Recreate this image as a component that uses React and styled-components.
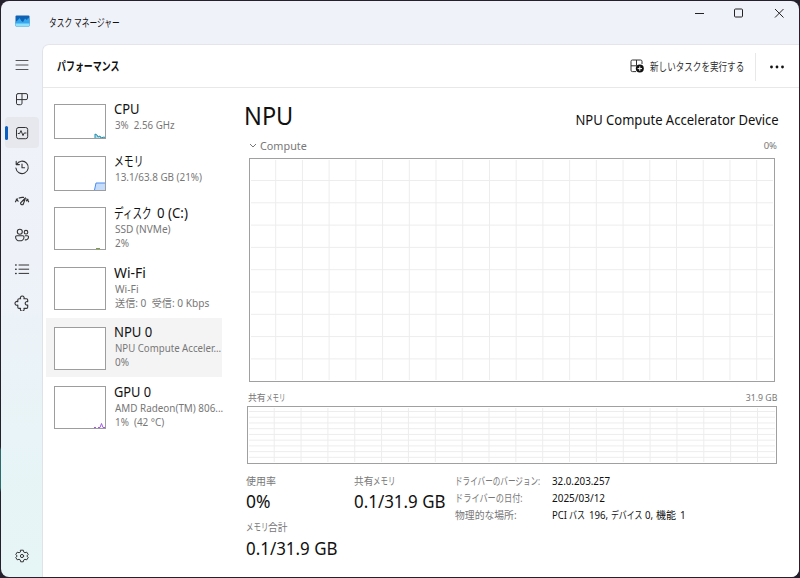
import React from "react";
import styled, { createGlobalStyle, css } from "styled-components";

const GlobalStyle = createGlobalStyle`
  * {
    box-sizing: border-box;
  }
  body {
    margin: 0;
    background: linear-gradient(180deg, #24212c 447px, #2c6b6c 450px, #2c6b6c 488px, #24212c 492px) left / 2px 578px no-repeat #24212c;
    font-family: "Noto Sans", "Noto Sans CJK JP", sans-serif;
  }
`;

const Window = styled.div`
  width: 798px;
  height: 576px;
  margin: 1px;
  display: flex;
  flex-direction: column;
  border-radius: 8px;
  overflow: hidden;
  background: linear-gradient(180deg, #f0f2f9 0%, #eef2f8 45%, #e8f4f7 75%, #e6f5f6 100%);
`;

const Text = styled.span`
  display: inline-block;
  flex: none;
  white-space: pre;
  ${(props) => props.$w && `width: ${props.$w}px;`}
  font-size: ${(props) => props.$size}px;
  line-height: ${(props) => props.$line || 14}px;
  font-weight: ${(props) => props.$weight || 400};
  color: ${(props) => props.$color || "#111"};
  transform: scaleX(${(props) => props.$sx || 1});
  transform-origin: ${(props) => (props.$right ? "right" : "0")} center;
`;

// each part keeps its own width, kana are set narrower than latin text
const PhraseRow = styled.div`
  display: flex;
`;

const Phrase = ({ parts, ...rest }) => (
  <PhraseRow>
    {parts.map(([label, sx, w]) => (
      <Text key={label} $sx={sx} $w={w} {...rest}>
        {label}
      </Text>
    ))}
  </PhraseRow>
);

const TitleBar = styled.header`
  height: 43px;
  flex: none;
  display: flex;
  padding-left: 14px;
`;

const AppTitle = styled.div`
  flex: 1;
  display: flex;
  gap: 19px;
  padding-top: 14px;
`;

const Caption = styled.div`
  display: flex;
  height: 24px;
  svg {
    width: 40px;
    height: 24px;
  }
`;

const Body = styled.div`
  flex: 1;
  min-height: 0;
  display: flex;
`;

const Nav = styled.nav`
  width: 41px;
  flex: none;
  display: flex;
  flex-direction: column;
  padding: 5px 4px 4px;
`;

const NavItem = styled.button`
  width: 34px;
  height: 31px;
  margin-bottom: 3px;
  flex: none;
  display: flex;
  align-items: center;
  padding: 0;
  border: 0;
  border-radius: 4px;
  background: ${(props) => (props.$active ? "#e6e8ee" : "transparent")};
  &:last-child {
    margin-top: auto;
    margin-bottom: 2px;
  }
  &::before {
    content: "";
    width: 3px;
    height: 14px;
    border-radius: 2px;
    background: ${(props) => (props.$active ? "#0a5fc0" : "transparent")};
  }
  svg {
    width: 16px;
    height: 16px;
    margin-left: 6px;
  }
`;

const Panel = styled.main`
  flex: 1;
  min-width: 0;
  display: flex;
  flex-direction: column;
  background: #fff;
  border-left: 1px solid #dfe3e9;
  border-top: 1px solid #e3e5eb;
  border-top-left-radius: 7px;
`;

const Toolbar = styled.div`
  height: 43px;
  flex: none;
  display: flex;
  align-items: center;
  padding: 1px 14px 0;
  border-bottom: 1px solid #e8e8e8;
`;

const Spacer = styled.div`
  flex: 1;
`;

const RunTask = styled.div`
  width: 125px;
  display: flex;
  align-items: center;
  gap: 5px;
  svg {
    flex: none;
  }
`;

const Divider = styled.div`
  width: 1px;
  height: 28px;
  margin-right: 13px;
  background: #e8e8e8;
`;

const Content = styled.div`
  flex: 1;
  min-height: 0;
  display: flex;
`;

const DeviceList = styled.div`
  width: 201px;
  flex: none;
  padding: 8px 0 0 3px;
`;

const DeviceRow = styled.div`
  width: 176px;
  height: ${(props) => props.$height}px;
  display: flex;
  gap: 8px;
  padding: 8px 0 0 8px;
  ${(props) =>
    props.$active &&
    css`
      background: #f4f4f4;
      padding-top: 9px;
      margin-bottom: 1px;
    `}
`;

const Thumb = styled.svg`
  width: 52px;
  height: ${(props) => props.$height}px;
  flex: none;
  background: #fff;
  border: 1px solid #9d9d9d;
`;

const DeviceText = styled.div`
  min-width: 0;
  display: flex;
  flex-direction: column;
  align-items: flex-start;
  margin-top: ${(props) => (props.$low ? -3 : -4)}px;
`;

const DeviceLines = styled.div`
  display: flex;
  flex-direction: column;
  align-items: flex-start;
  padding-left: 1px;
`;

const Detail = styled.section`
  flex: 1;
  min-width: 0;
  padding-right: 20px;
`;

const Heading = styled.div`
  height: 49px;
  display: flex;
  justify-content: space-between;
  align-items: flex-end;
  padding-bottom: 3px;
`;

const ChartLabel = styled.div`
  height: ${(props) => props.$height}px;
  display: flex;
  align-items: center;
  justify-content: space-between;
  padding-top: ${(props) => props.$top || 0}px;
  padding-bottom: ${(props) => props.$bottom || 0}px;
  padding-left: ${(props) => props.$left || 0}px;
  padding-right: 2px;
`;

const Disclosure = styled.div`
  display: flex;
  align-items: center;
  gap: 3px;
`;

const Chart = styled.svg`
  display: block;
  width: ${(props) => props.$width}px;
  height: ${(props) => props.$height}px;
  margin-left: ${(props) => props.$left}px;
`;

const Stats = styled.div`
  display: flex;
  padding: 10px 0 0 1.5px;
`;

const StatColumn = styled.div`
  width: ${(props) => props.$width}px;
  flex: none;
  display: flex;
  flex-direction: column;
`;

const Stat = styled.div`
  height: 46px;
  display: flex;
  flex-direction: column;
  align-items: flex-start;
`;

const Info = styled.div`
  display: grid;
  grid-template-columns: 97px auto;
  grid-auto-rows: 17px;
  align-content: start;
  justify-items: start;
`;

const Glyph = ({ children, weight = 1 }) => (
  <svg viewBox="0 0 16 16" fill="none" stroke="#333" strokeWidth={weight} strokeLinecap="round" strokeLinejoin="round">
    {children}
  </svg>
);

const MenuIcon = () => (
  <Glyph>
    <path d="M2 3.5h12M2 8h12M2 12.5h12" stroke="#555" />
  </Glyph>
);

const ProcessesIcon = () => (
  <Glyph>
    <path d="M4 2.6h8a1.5 1.5 0 0 1 1.5 1.5v3a1.5 1.5 0 0 1-1.5 1.5H2.6M8 2.6v9.6a1.5 1.5 0 0 1-1.5 1.5H4a1.5 1.5 0 0 1-1.5-1.5V4.1A1.5 1.5 0 0 1 4 2.6" />
  </Glyph>
);

const PerformanceIcon = () => (
  <Glyph>
    <rect x="2.5" y="2.5" width="11.2" height="11.2" rx="2" />
    <path d="M4.2 8.5h1.5L7 5.6l2 5 1.2-2.6h1.8" />
  </Glyph>
);

const HistoryIcon = () => (
  <Glyph weight={1.1}>
    <path d="M2.2 2.4v3.2h3.2M2.6 5.4A6.2 6.2 0 1 1 1.9 9M8 5v3.7h2.6" />
  </Glyph>
);

const StartupIcon = () => (
  <Glyph weight={1.2}>
    <path d="M1.5 8.8a6.8 6.8 0 0 1 2-2.9M5.2 5a7 7 0 0 1 4.3-.6M12.800 6a6.8 6.8 0 0 1 1.8 2.800M2.300 6.200l1.800 2M14 6.400l-1.600 1.400" />
    <path d="M11.400 5 9.400 10.900a1.500 1.500 0 0 1-2.800-1z" />
  </Glyph>
);

const UsersIcon = () => (
  <Glyph weight={1.1}>
    <circle cx="5.8" cy="4.7" r="2.5" />
    <circle cx="12" cy="5.2" r="1.8" />
    <path d="M2.8 8.7h6a1.2 1.2 0 0 1 1.2 1.2c0 2.4-1.8 3.9-4.2 3.9s-4.2-1.5-4.2-3.9a1.2 1.2 0 0 1 1.2-1.2zM11.3 8.7h2a1.2 1.2 0 0 1 1.2 1.2c0 2-1.4 3.1-3.3 3" />
  </Glyph>
);

const DetailsIcon = () => (
  <Glyph>
    <path d="M5 4h9.7M5 8.2h9.7M5 12.4h9.7" />
    <path d="M1.7 4h.4M1.7 8.2h.4M1.7 12.4h.4" strokeWidth="1.5" />
  </Glyph>
);

const ServicesIcon = () => (
  <Glyph weight={1.1}>
    <path d="M5 3.8h1.6a1.9 1.9 0 1 1 3.3 0h2.6a1.2 1.2 0 0 1 1.2 1.2v1.7a1.8 1.8 0 1 0 0 3.300v2.200a1.200 1.200 0 0 1-1.200 1.200H9.900a1.900 1.900 0 1 1-3.300 0H5a1.200 1.200 0 0 1-1.200-1.200V10a1.900 1.900 0 1 1 0-3.300V5A1.200 1.200 0 0 1 5 3.800z" />
  </Glyph>
);

const SettingsIcon = () => (
  <Glyph>
    <path d="M6.7 2.2h2.6l.5 1.9 1.1.6 1.9-.5 1.4 2.3L12.800 8l1.400 1.500-1.400 2.300-1.900-.5-1.100.6-.5 1.900H6.700l-.5-1.900-1.100-.6-1.900.5-1.400-2.300L3.200 8 1.800 6.500l1.400-2.300 1.900.5 1.100-.6z" />
    <circle cx="8" cy="8" r="1.6" />
  </Glyph>
);

const Logo = () => (
  <svg width="15" height="12" viewBox="0 0 15 12">
    <rect x=".5" y=".5" width="14" height="11" rx="1" fill="#0f62b4" />
    <path d="M.5 7 3 5l1.600-2 1.800 3L8 7l2-3.500L12 5l1-2 1.500 1v7H.5z" fill="#36a7ee" />
    <path d="M.5 8.500h14v2.200a.8.8 0 0 1-.8.8H1.300a.8.8 0 0 1-.8-.8z" fill="#8fe0fb" />
  </svg>
);

const RunIcon = () => (
  <svg width="15" height="15" viewBox="0 0 15 15" fill="none" stroke="#333">
    <path d="M6 12.6H2.400A1.400 1.400 0 0 1 1 11.200V2.400A1.400 1.400 0 0 1 2.400 1h8.200a1.400 1.400 0 0 1 1.400 1.400V5M1 6.800h5.500M6.500 1v5.800" />
    <circle cx="9.800" cy="9.600" r="4" fill="#111" stroke="none" />
    <path d="M7.600 9.600h4.400M9.800 7.400v4.400" stroke="#fff" />
  </svg>
);

const Grid = ({ width, height, left, x0, dx, y0, dy, cols, rows }) => (
  <Chart $width={width} $height={height} $left={left} viewBox={`0 0 ${width} ${height}`}>
    <g stroke="#ededed">
      {Array.from({ length: cols }, (_, i) => (
        <path key={i} d={`M${x0 + dx * i} 2V${height - 2}`} />
      ))}
      {Array.from({ length: rows }, (_, i) => (
        <path key={i} d={`M2 ${y0 + dy * i}H${width - 2}`} />
      ))}
    </g>
    <rect x=".5" y=".5" width={width - 1} height={height - 1} fill="none" stroke="#a0a0a0" />
  </Chart>
);

const navItems = [
  MenuIcon,
  ProcessesIcon,
  PerformanceIcon,
  HistoryIcon,
  StartupIcon,
  UsersIcon,
  DetailsIcon,
  ServicesIcon,
  SettingsIcon,
];

const devices = [
  {
    title: [["CPU", 0.96]],
    lines: [["3%  2.56 GHz", 0.93]],
    height: 52,
    graph: <path d="M40 33v-4l2 1 1 2 2-1 1 2 3-1 2 1" fill="#b7dfe9" stroke="#1f8fb0" />,
  },
  {
    title: [["メモリ", 0.73]],
    lines: [["13.1/63.8 GB (21%)", 0.94]],
    height: 51,
    graph: <path d="M39.500 33l1.500-7H51v7" fill="#c5dcfa" stroke="#4a8df0" />,
  },
  {
    title: [
      ["ディスク", 0.71, 42.5],
      ["0 (C:)", 0.98],
    ],
    lines: [
      ["SSD (NVMe)", 0.96],
      ["2%", 0.95],
    ],
    height: 60,
    low: true,
    graph: <path d="M41 40.500h4" stroke="#7ba23c" />,
  },
  {
    title: [["Wi-Fi", 1.03]],
    lines: [
      ["Wi-Fi", 0.98],
      ["送信: 0  受信: 0 Kbps", 0.965],
    ],
    height: 59,
    low: true,
  },
  {
    title: [["NPU 0", 0.97]],
    lines: [
      ["NPU Compute Acceler...", 0.92],
      ["0%", 0.95],
    ],
    height: 59,
    active: true,
  },
  {
    title: [["GPU 0", 0.95]],
    lines: [
      ["AMD Radeon(TM) 806...", 0.94],
      ["1%  (42 °C)", 0.94],
    ],
    height: 60,
    low: true,
    graph: <path d="M39 40.500h2m2 0h2l1.500-4 1.500 4h2" fill="none" stroke="#a259e6" />,
  },
];

const App = () => (
  <>
    <GlobalStyle />
    <Window>
      <TitleBar>
        <AppTitle>
          <Logo />
          <Text $size={11} $sx={0.7} $line={15}>タスク マネージャー</Text>
        </AppTitle>
        <Caption>
          <svg viewBox="0 0 40 24" stroke="#222">
            <path d="M16 12.500h9" />
          </svg>
          <svg viewBox="0 0 40 24" stroke="#222" fill="none">
            <rect x="15.500" y="8" width="8" height="8" rx="1" />
          </svg>
          <svg viewBox="0 0 40 24" stroke="#222">
            <path d="M16 8l8.500 8.500M24.500 8 16 16.500" />
          </svg>
        </Caption>
      </TitleBar>
      <Body>
        <Nav>
          {navItems.map((Icon, i) => (
            <NavItem key={i} $active={i === 2}>
              <Icon />
            </NavItem>
          ))}
        </Nav>
        <Panel>
          <Toolbar>
            <Text $size={12} $weight={600} $sx={0.745} $line={16}>パフォーマンス</Text>
            <Spacer />
            <RunTask>
              <RunIcon />
              <Text $size={11.5} $color="#333" $sx={0.745}>新しいタスクを実行する</Text>
            </RunTask>
            <Divider />
            <svg width="16" height="4" viewBox="0 0 16 4" fill="#111">
              <circle cx="2.500" cy="2" r="1.400" />
              <circle cx="8" cy="2" r="1.400" />
              <circle cx="13.500" cy="2" r="1.400" />
            </svg>
          </Toolbar>
          <Content>
            <DeviceList>
              {devices.map((d) => (
                <DeviceRow key={d.title[0][0]} $height={d.height} $active={d.active}>
                  <Thumb $height={d.lines.length > 1 ? 43 : 35}>{d.graph}</Thumb>
                  <DeviceText $low={d.low}>
                    <Phrase parts={d.title} $size={13.5} $line={18} />
                    <DeviceLines>
                      {d.lines.map(([label, sx]) => (
                        <Text key={label} $size={10.5} $color="#777" $sx={sx}>{label}</Text>
                      ))}
                    </DeviceLines>
                  </DeviceText>
                </DeviceRow>
              ))}
            </DeviceList>
            <Detail>
              <Heading>
                <Text $size={24.5} $line={36} $sx={0.96}>NPU</Text>
                <Text $size={13.5} $line={28} $right $sx={0.965}>NPU Compute Accelerator Device</Text>
              </Heading>
              <ChartLabel $height={21} $left={5} $bottom={3}>
                <Disclosure>
                  <svg width="8" height="8" fill="none" stroke="#777">
                    <path d="M1 2l3 3 3-3" />
                  </svg>
                  <Text $size={11.5} $color="#777" $sx={0.94}>Compute</Text>
                </Disclosure>
                <Text $size={9.5} $color="#777" $right>0%</Text>
              </ChartLabel>
              <Grid width={526} height={224} left={5} x0={26.7} dx={26.72} y0={22.5} dy={22.3} cols={19} rows={9} />
              <ChartLabel $height={24} $top={7} $left={3.5}>
                <Phrase
                  parts={[
                    ["共有", 0.93, 18],
                    ["メモリ", 0.68, 28.5],
                  ]}
                  $size={9.5}
                  $color="#777"
                />
                <Text $size={9.5} $color="#777" $right $sx={0.92}>31.9 GB</Text>
              </ChartLabel>
              <Grid width={530} height={58} left={3} x0={27.2} dx={26.85} y0={5.5} dy={5.73} cols={19} rows={9} />
              <Stats>
                <StatColumn $width={108}>
                  <Stat>
                    <Text $size={10.5} $color="#777" $sx={0.95}>使用率</Text>
                    <Text $size={18} $line={27} $sx={0.97}>0%</Text>
                  </Stat>
                  <Stat>
                    <Phrase
                      parts={[
                        ["メモリ", 0.71, 22],
                        ["合計", 0.93, 21],
                      ]}
                      $size={10.5}
                      $color="#777"
                    />
                    <Text $size={18} $line={28} $sx={0.94}>0.1/31.9 GB</Text>
                  </Stat>
                </StatColumn>
                <StatColumn $width={101.5}>
                  <Stat>
                    <Phrase
                      parts={[
                        ["共有", 0.92, 19.5],
                        ["メモリ", 0.71, 31.5],
                      ]}
                      $size={10.5}
                      $color="#777"
                    />
                    <Text $size={18} $line={27} $sx={0.94}>0.1/31.9 GB</Text>
                  </Stat>
                </StatColumn>
                <Info>
                  <Text $size={10.5} $color="#777" $sx={0.722} $w={97}>ドライバーのバージョン:</Text>
                  <Text $size={10.5} $sx={0.93}>32.0.203.257</Text>
                  <Text $size={10.5} $color="#777" $sx={0.78}>ドライバーの日付:</Text>
                  <Text $size={10.5} $sx={0.95}>2025/03/12</Text>
                  <Text $size={10.5} $color="#777" $sx={0.935}>物理的な場所:</Text>
                  <Phrase
                    parts={[
                      ["PCI", 0.9, 17],
                      ["バス", 0.76, 20],
                      ["196,", 0.92, 21.5],
                      ["デバイス", 0.75, 34],
                      ["0,", 0.92, 11.5],
                      ["機能", 0.95, 24],
                      ["1", 0.95, 6],
                    ]}
                    $size={10.5}
                  />
                </Info>
              </Stats>
            </Detail>
          </Content>
        </Panel>
      </Body>
    </Window>
  </>
);

export default App;
